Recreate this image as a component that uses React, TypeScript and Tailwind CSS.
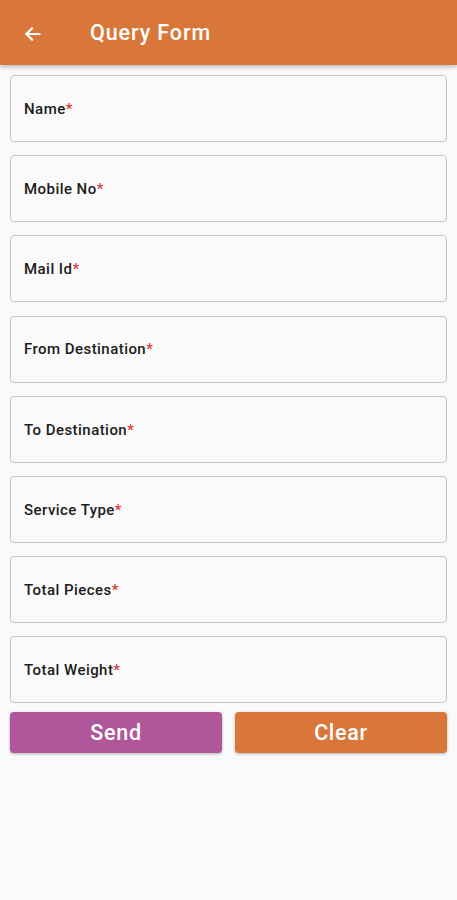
const fields = [
  'Name',
  'Mobile No',
  'Mail Id',
  'From Destination',
  'To Destination',
  'Service Type',
  'Total Pieces',
  'Total Weight',
]

function BackArrow() {
  return (
    <svg width="20" height="20" viewBox="0 0 24 24" fill="none" stroke="white" strokeWidth="2.6" strokeLinecap="round" strokeLinejoin="round">
      <path d="M20 12H4" />
      <path d="M11 5l-7 7 7 7" />
    </svg>
  )
}

export default function App() {
  return (
    <div className="min-h-[900px] bg-[#fafafa] font-['Roboto',sans-serif]">
      {/* App bar */}
      <div className="flex h-[65px] items-center bg-[#d9773a] pt-[2px] shadow-[0_2px_4px_rgba(0,0,0,0.25)]">
        <div className="ml-[23px] flex w-5 items-center">
          <BackArrow />
        </div>
        <h1 className="ml-[47px] text-[21.5px] font-medium tracking-[0.9px] text-white">Query Form</h1>
      </div>

      <div className="flex flex-col gap-[13.2px] px-[10px] pt-[10px]">
        {fields.map((f) => (
          <div
            key={f}
            className="flex h-[67px] items-center rounded-[4px] border-[1.5px] border-[#c4c4c4] bg-[#fafafa] px-[13px] pt-[1px]"
          >
            <span className="text-[15px] font-medium tracking-[0.45px] text-[#1c1c1c]">
              {f}
              <span className="text-[#e53935]">*</span>
            </span>
          </div>
        ))}
      </div>

      <div className="mt-[9px] flex gap-[13px] px-[10px]">
        <button className="h-[41px] flex-1 rounded-[4px] bg-[#b0569a] text-[21.5px] font-medium tracking-[0.7px] text-white shadow-[0_1px_3px_rgba(0,0,0,0.3)]">
          Send
        </button>
        <button className="h-[41px] flex-1 rounded-[4px] bg-[#d9773a] text-[21.5px] font-medium tracking-[0.7px] text-white shadow-[0_1px_3px_rgba(0,0,0,0.3)]">
          Clear
        </button>
      </div>
    </div>
  )
}
